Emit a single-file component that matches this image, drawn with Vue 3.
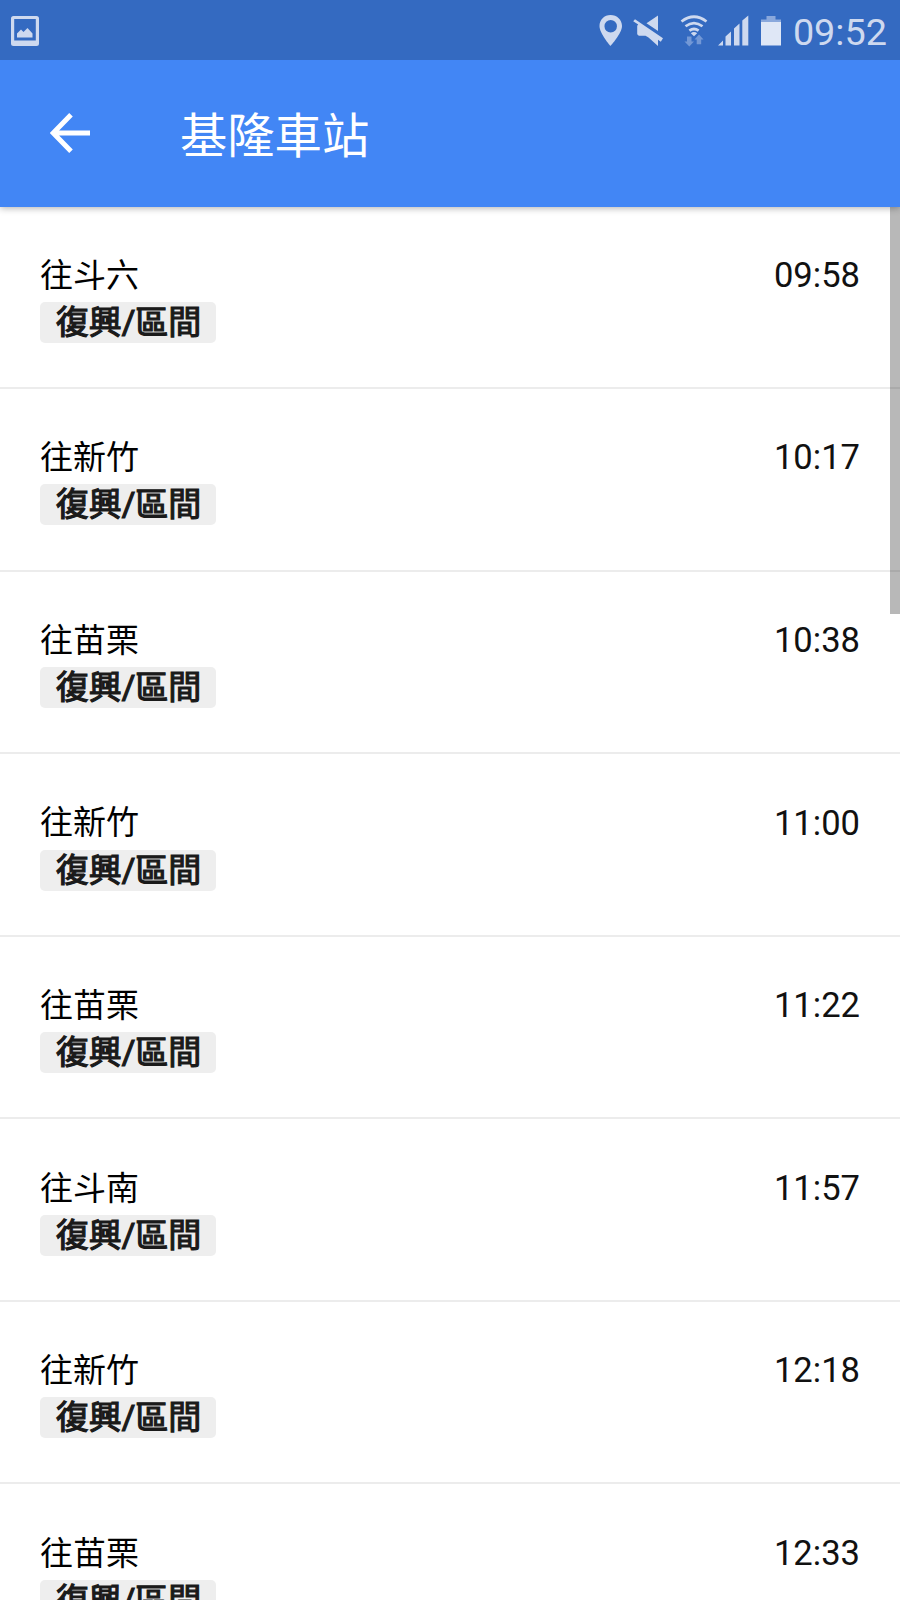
<script setup>
const trips = [
  { to: '往斗六', time: '09:58' },
  { to: '往新竹', time: '10:17' },
  { to: '往苗栗', time: '10:38' },
  { to: '往新竹', time: '11:00' },
  { to: '往苗栗', time: '11:22' },
  { to: '往斗南', time: '11:57' },
  { to: '往新竹', time: '12:18' },
  { to: '往苗栗', time: '12:33' },
]
</script>

<template>
  <div class="screen">
    <div class="status">
      <svg class="picture" width="28" height="30" viewBox="0 0 28 30">
        <path fill-rule="evenodd" d="M2.5 0h23A2.5 2.5 0 0 1 28 2.5v25a2.5 2.5 0 0 1-2.5 2.5h-23A2.5 2.5 0 0 1 0 27.500v-25A2.500 2.500 0 0 1 2.500 0zM3.200 3v21.500h21.600V3z" />
        <path d="M6 21.500v-4l4-4 2.500 2.500 4-4 5 5.500v4z" />
      </svg>
      <svg class="icons" width="190" height="36" viewBox="595 12 190 36">
        <path fill-rule="evenodd" d="M610.500 15c-6.200 0-11 4.800-11 11 0 7.500 11 20 11 20s11.500-12.500 11.500-20c0-6.200-5-11-11.500-11zm.2 5a6 6 0 1 1 0 12.500 6 6 0 0 1 0-12.500z" />
        <path d="M658 15.500v15.500l-11.500-7.800zM635 19.200l28 19-2.200 3.500-2.800-1.900v6.200l-9.500-8.500-3-1.700h-6.700l-1.600-1.500v-8.500l1-1.300-5-3.200z" />
        <g fill="none" stroke="#ced9ef" stroke-width="2.700">
          <path d="M681.500 21.500q12.500-9.500 25 0" />
          <path d="M685.500 26.300q8.500-6.500 17 0" />
          <path d="M689.400 30.700q4.600-3.400 9.200 0" />
        </g>
        <path d="M690.800 33.200q3.200-2.500 6.400 0l-3.200 3z" />
        <path class="faint" d="M687 36.500h4.500v5h2.500l-4.700 5-4.800-5h2.500zM699 34.500l4.500 5h-2.300v4.800h-4.500v-4.800h-2.200z" />
        <path d="M718 45.500l5-5v5zM725.500 45.500v-9l5.500-5v14zM734 45.500v-17l5.500-5v22zM742.300 45.500V20.500l6-5v30z" />
        <path class="cap" d="M761 22v-2.500h5.500V16h9v3.500h5.500V22z" />
        <path class="charge" d="M761 22h20v23.500h-20z" />
      </svg>
      <span class="clock">09:52</span>
    </div>
    <header class="bar">
      <svg class="back" width="40" height="40" viewBox="0 0 40 40">
        <path d="M21 1.800L3.200 20 21 38.200M3.500 20H40" fill="none" stroke="#fff" stroke-width="5" />
      </svg>
      <h1>基隆車站</h1>
    </header>
    <main>
      <div v-for="trip in trips" :key="trip.time" class="row">
        <div>
          <div class="to">{{ trip.to }}</div>
          <div class="badge">復興/區間</div>
        </div>
        <div class="time">{{ trip.time }}</div>
      </div>
      <div class="thumb"></div>
    </main>
  </div>
</template>

<style>
body {
  margin: 0;
  overflow: hidden;
}
</style>

<style scoped>
.screen {
  width: 900px;
  height: 1600px;
  overflow: hidden;
  display: flex;
  flex-direction: column;
  background: #fff;
  font-family: Roboto, "Noto Sans CJK TC", sans-serif;
}
.status {
  height: 60px;
  flex: none;
  box-sizing: border-box;
  padding: 0 13px 0 11px;
  display: flex;
  align-items: center;
  background: #346ac1;
  color: #ced9ef;
  fill: #ced9ef;
  position: relative;
  z-index: 2;
}
.picture {
  margin-top: 1px;
}
.icons {
  margin-left: auto;
}
.faint {
  fill: #7398d6;
}
.cap {
  fill: #8aa8dc;
}
.charge {
  fill: #dfe7f6;
}
.clock {
  margin-left: 8px;
  font-size: 37.8px;
  line-height: 60px;
  padding-top: 4px;
}
.bar {
  height: 147px;
  flex: none;
  box-sizing: border-box;
  padding-left: 50px;
  display: flex;
  align-items: center;
  background: #4286f5;
  box-shadow: 0 1px 7px rgba(0, 0, 0, 0.32);
  position: relative;
  z-index: 1;
}
.back {
  margin-bottom: 1px;
}
h1 {
  margin: 0 0 1px 90px;
  font: 400 47.3px/60px "Noto Sans CJK TC", sans-serif;
  color: #fff;
}
main {
  flex: 1;
  min-height: 0;
  margin-top: -0.7px;
  overflow: hidden;
  position: relative;
}
.row {
  height: 182.6px;
  box-sizing: border-box;
  padding: 46.3px 40px 0;
  display: flex;
  justify-content: space-between;
  border-bottom: 2px solid #ececec;
}
.to {
  font: 400 33px/40px "Noto Sans CJK TC", sans-serif;
  color: #000;
}
.badge {
  margin-top: 9.200px;
  height: 41px;
  width: 176px;
  box-sizing: border-box;
  padding-left: 1px;
  border-radius: 5px;
  text-align: center;
  background: #eee;
  color: #1a1a1a;
  font: 400 33px/42px Roboto, "Noto Sans CJK TC", sans-serif;
  -webkit-text-stroke: 1.2px #1a1a1a;
}
.time {
  font-size: 34.6px;
  line-height: 40px;
  padding-top: 2.200px;
  color: #111;
}
.thumb {
  position: absolute;
  top: 0;
  right: 0;
  width: 10px;
  height: 407.7px;
  background: rgba(0, 0, 0, 0.28);
}
</style>
